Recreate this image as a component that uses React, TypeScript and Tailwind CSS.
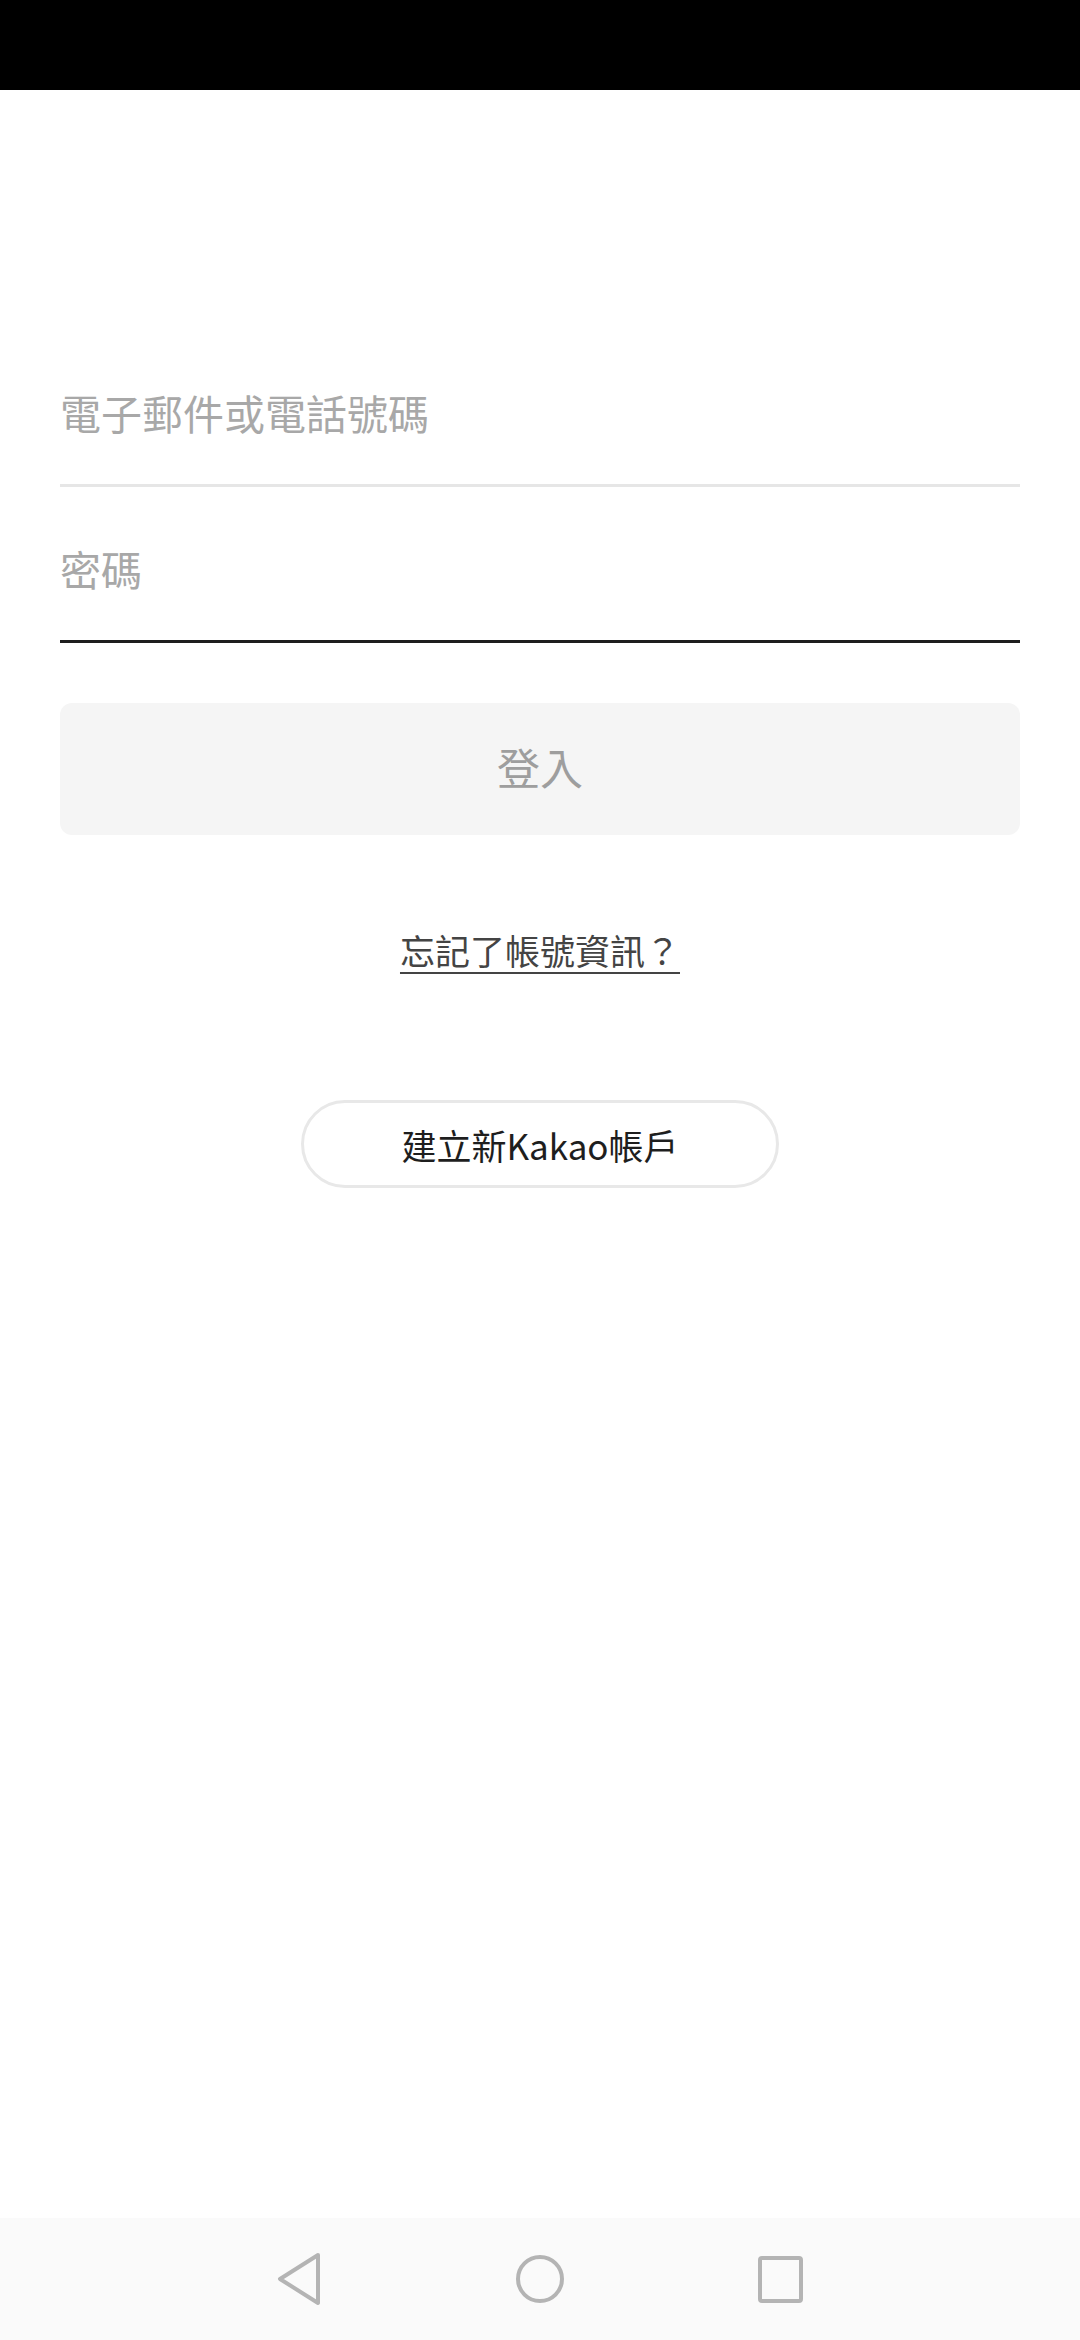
import React from "react";

const font = { fontFamily: '"Noto Sans CJK TC", "Noto Sans", sans-serif' };

export default function App() {
  return (
    <div
      className="flex h-[2340px] w-[1080px] flex-col bg-white"
      style={font}
    >
      <div className="h-[90px] w-full shrink-0 bg-black" />
      <main className="flex flex-1 flex-col px-[60px] pt-[241px]">
        <div className="border-b-[3px] border-[#e6e6e6] pb-[52px] pt-[61px]">
          <div className="text-[41px] leading-[40px] text-[#a8a8a8]">
            電子郵件或電話號碼
          </div>
        </div>
        <div className="border-b-[3px] border-[#1e1e1e] pb-[52px] pt-[61px]">
          <div className="text-[41px] leading-[40px] text-[#a8a8a8]">密碼</div>
        </div>
        <button className="mt-[60px] flex h-[132px] w-full items-center justify-center rounded-[12px] bg-[#f5f5f5] pb-[6px] text-[43px] leading-none text-[#9e9e9e]">
          登入
        </button>
        <div className="mt-[97px] flex justify-center">
          <span className="text-[35px] leading-[35px] text-[#444444] underline decoration-[2px] underline-offset-[7px]">
            忘記了帳號資訊？
          </span>
        </div>
        <div className="mt-[133px] flex justify-center">
          <button className="flex h-[88px] w-[478px] items-center justify-center rounded-full border-[3px] border-[#e8e8e8] bg-white text-[35px] leading-none text-[#1e1e1e]">
            建立新Kakao帳戶
          </button>
        </div>
      </main>
      <div className="flex h-[122px] w-full shrink-0 items-center justify-center bg-[#fafafa]">
        <div className="grid w-[720px] grid-cols-3 items-center justify-items-center">
          <svg width="46" height="54" viewBox="0 0 46 54" fill="none">
            <path
              d="M41 3 L3 27 L41 51 Z"
              stroke="#b4b4b4"
              strokeWidth="4"
              strokeLinejoin="round"
            />
          </svg>
          <svg width="50" height="50" viewBox="0 0 50 50" fill="none">
            <circle cx="25" cy="25" r="22" stroke="#b4b4b4" strokeWidth="4" />
          </svg>
          <svg width="45" height="47" viewBox="0 0 45 47" fill="none">
            <rect
              x="2"
              y="2"
              width="41"
              height="43"
              rx="2"
              stroke="#b4b4b4"
              strokeWidth="4"
            />
          </svg>
        </div>
      </div>
    </div>
  );
}
